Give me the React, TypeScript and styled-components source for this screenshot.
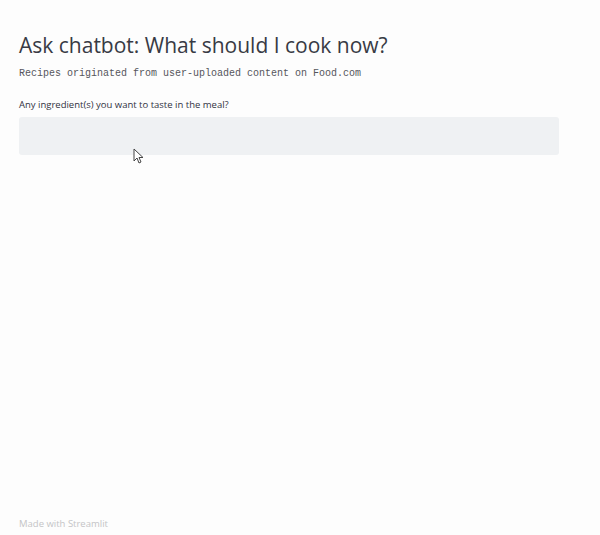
import styled, { createGlobalStyle } from "styled-components";

const GlobalStyle = createGlobalStyle`
  html, body {
    margin: 0;
    padding: 0;
    background: #fdfdfd;
  }
  * { box-sizing: border-box; }
`;

// Layout
const Page = styled.div`
  position: relative;
  display: flex;
  flex-direction: column;
  width: 600px;
  height: 535px;
  padding: 28px 41px 4px 19px;
  background: #fdfdfd;
  color: #31333f;
  font-family: "Open Sans", "Noto Sans", sans-serif;
`;

const Title = styled.h1`
  margin: 0;
  font-size: 21px;
  font-weight: 400;
  line-height: 34px;
  color: #383a44;
`;

const Caption = styled.p`
  margin: 4px 0 0;
  font-family: "Liberation Mono", "DejaVu Sans Mono", monospace;
  font-size: 10px;
  line-height: 16px;
  color: #55565c;
`;

const Field = styled.div`
  display: flex;
  flex-direction: column;
  margin-top: 16px;
`;

const Label = styled.label`
  font-size: 9.5px;
  line-height: 14px;
  color: #31333f;
  margin-bottom: 5px;
`;

const Input = styled.input`
  height: 38px;
  width: 100%;
  border: none;
  outline: none;
  border-radius: 3px;
  background: #eff1f3;
  padding: 0 10px;
  font-family: inherit;
  font-size: 11px;
  color: #31333f;
`;

const Footer = styled.footer`
  margin-top: auto;
  font-size: 9.5px;
  line-height: 14px;
  color: #c4c4c6;
`;

const Cursor = styled.svg`
  position: absolute;
  left: 133px;
  top: 148px;
  width: 11px;
  height: 16px;
`;

const App = () => {
  return (
    <>
      <GlobalStyle />
      <Page>
        <Title>Ask chatbot: What should I cook now?</Title>
        <Caption>Recipes originated from user-uploaded content on Food.com</Caption>

        <Field>
          <Label>Any ingredient(s) you want to taste in the meal?</Label>
          <Input type="text" />
        </Field>

        <Footer>Made with Streamlit</Footer>

        {/* mouse pointer */}
        <Cursor viewBox="0 0 11 16">
          <path
            d="M1 1 L1 13 L4 10 L6 15 L8 14 L6 9.5 L10 9.5 Z"
            fill="#fff"
            stroke="#444"
            strokeWidth="1"
            strokeLinejoin="round"
          />
        </Cursor>
      </Page>
    </>
  );
};

export default App;
